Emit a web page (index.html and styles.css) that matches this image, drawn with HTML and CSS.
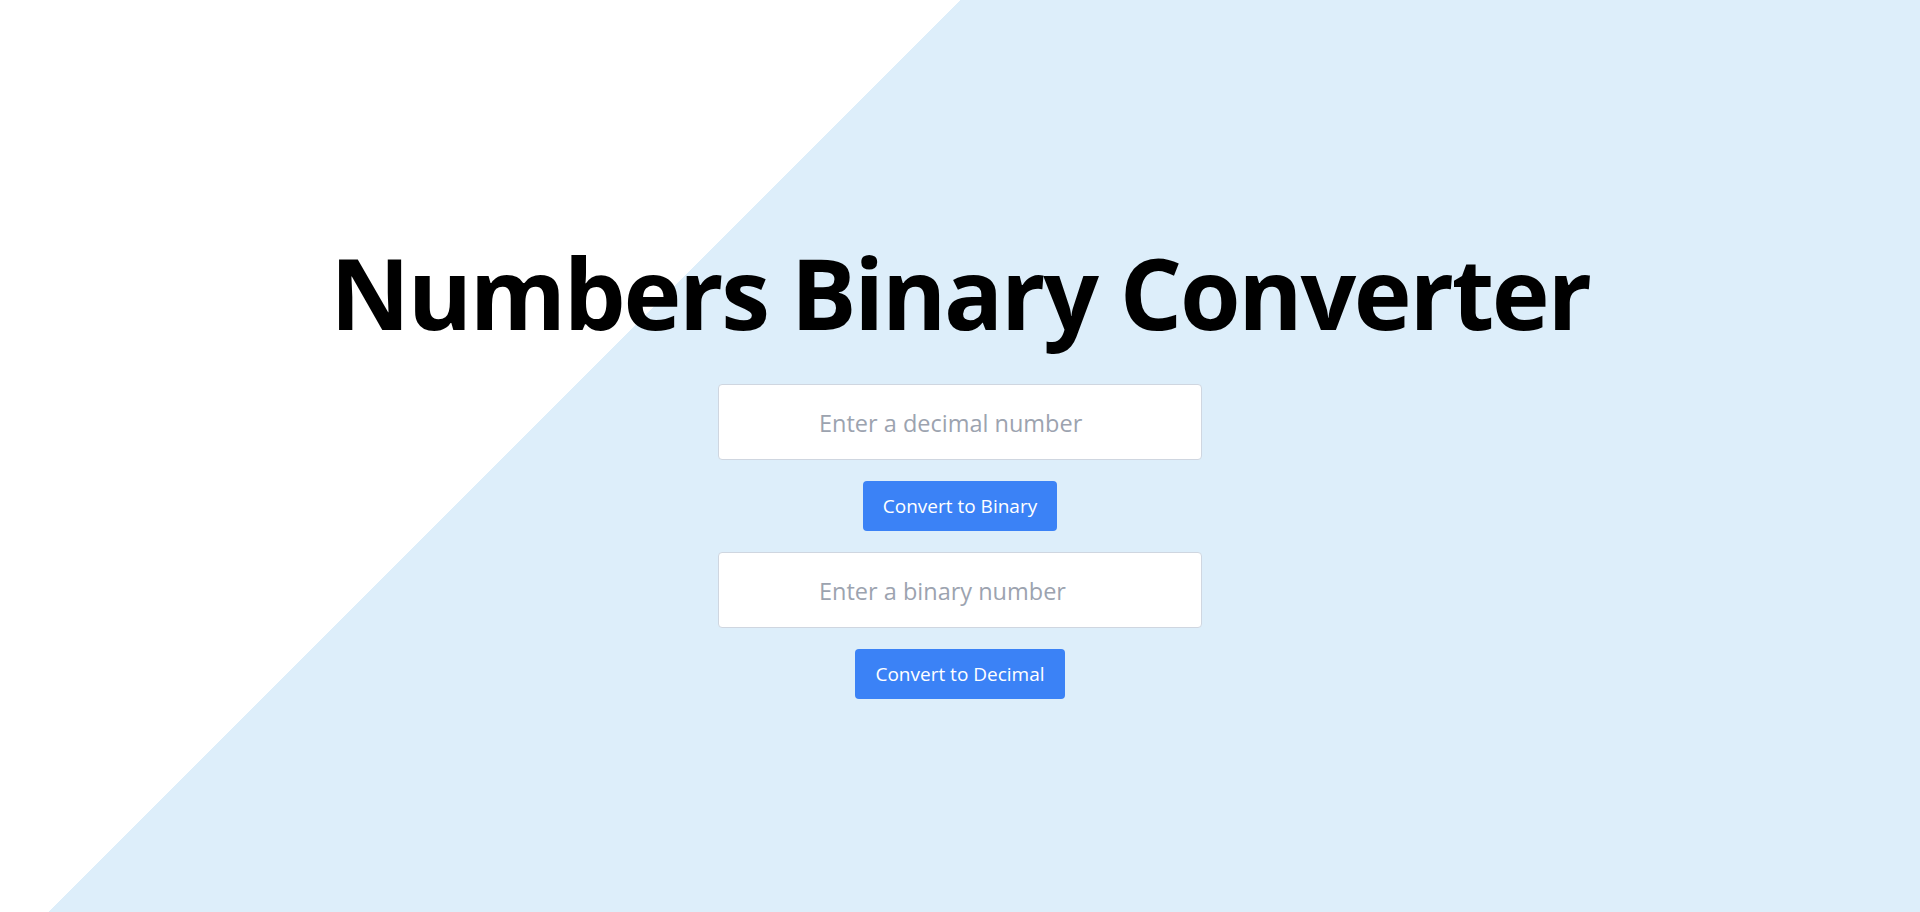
FILE: index.html
```html
<!DOCTYPE html>
<html lang="en">
<head>
<meta charset="utf-8">
<title>Numbers Binary Converter</title>
<link rel="stylesheet" href="styles.css">
</head>
<body>
<main class="converter">
  <h1 class="title">Numbers Binary Converter</h1>
  <input class="field" type="text" placeholder="Enter a decimal number">
  <button class="btn" type="button">Convert to Binary</button>
  <input class="field" type="text" placeholder="Enter a binary number">
  <button class="btn" type="button">Convert to Decimal</button>
</main>
</body>
</html>
```
FILE: styles.css
```css
html, body {
  margin: 0;
  padding: 0;
}
body {
  min-height: 100vh;
  background: linear-gradient(135deg, #ffffff 33.9%, #ddeefa 33.9%);
  font-family: "Open Sans", "Noto Sans", sans-serif;
}
.converter {
  display: flex;
  flex-direction: column;
  align-items: center;
  padding-top: 233px;
}
.title {
  margin: 0 0 33px;
  font-size: 98px;
  line-height: 118px;
  font-weight: 700;
  color: #000;
  letter-spacing: -2.3px;
}
.field {
  box-sizing: border-box;
  width: 484px;
  height: 76px;
  border: 1px solid #cfd6e0;
  border-radius: 4px;
  background: #fff;
  padding: 2px 20px 0 100px;
  font-family: inherit;
  font-size: 23.5px;
  color: #111;
  outline: none;
}
.field::placeholder {
  color: #9ca3af;
}
.btn {
  margin: 21px 0;
  height: 50px;
  padding: 0 20px;
  border: 0;
  border-radius: 4px;
  background: #3b82f6;
  color: #fff;
  font-family: inherit;
  font-size: 19px;
  cursor: pointer;
}
```
